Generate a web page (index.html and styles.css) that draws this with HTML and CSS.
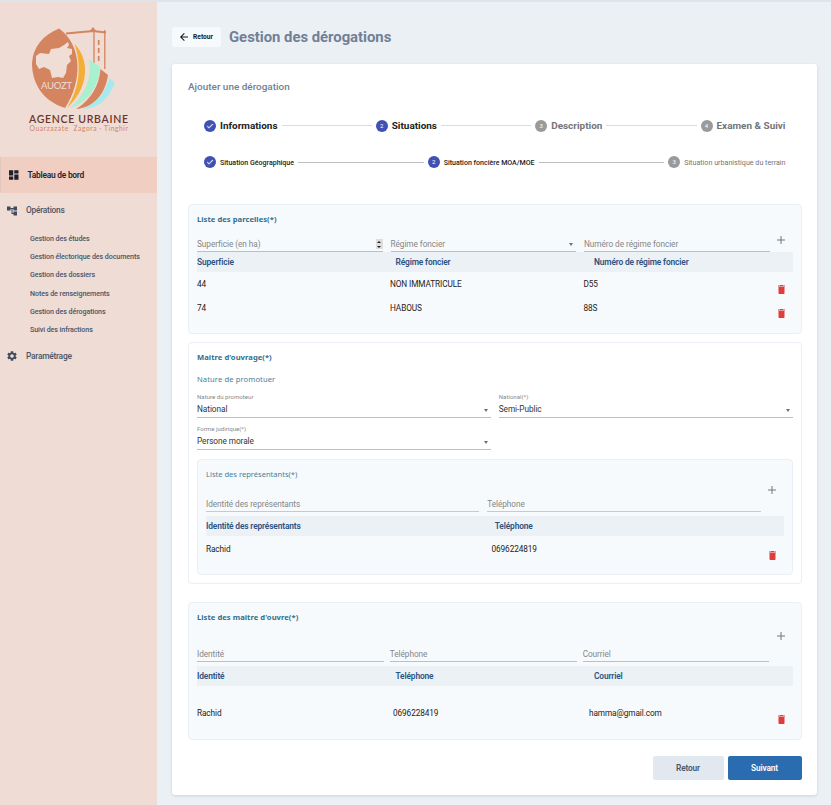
FILE: index.html
```html
<!DOCTYPE html>
<html lang="fr">
<head>
<meta charset="utf-8">
<title>Gestion des dérogations</title>
<link rel="stylesheet" href="styles.css">
</head>
<body>
<svg class="defs" aria-hidden="true">
  <symbol id="trash" viewBox="5 3 14 18"><path d="M6 19c0 1.1.9 2 2 2h8c1.100 0 2-.9 2-2V7H6v12zM19 4h-3.500l-1-1h-5l-1 1H5v2h14V4z"/></symbol>
  <symbol id="plus" viewBox="5 5 14 14"><path d="M19 12.900h-6.100V19h-1.800v-6.100H5v-1.800h6.100V5h1.800v6.100H19z"/></symbol>
  <symbol id="check" viewBox="0 0 24 24"><path d="M9 16.200L4.800 12l-1.400 1.400L9 19 21 7l-1.400-1.400z"/></symbol>
</svg>
<div class="app">
  <aside class="sidebar">
    <svg class="logo" viewBox="0 0 156 155">
      <g fill="none" stroke="#d4845f">
        <path d="M66 31.500L93 29L106 30.500" stroke-width="2"/>
        <path d="M94 30V61M104.800 28V67" stroke-width="1.300"/>
        <path d="M98.700 38V62" stroke-width="1.700" stroke-dasharray="5 3"/>
      </g>
      <path d="M89.500 29.500l3.500-4.500 3.500 4.500z" fill="#d4845f"/>
      <path d="M59 26.500C82 43 83 78 65 106C43 99 32 82 32 61C33 45 43 33 59 26.500Z" fill="#d4845f"/>
      <path d="M36 54l4-3 9 1 2-5 8-1 5-3 4-3 1 3-2 3 5 1 0 5-3 2 2 5-4 4-1 8-3 5-5-1-6 1-2-8-6-3-5 2-3-5z" fill="#f0ddd5"/>
      <path d="M74.500 42C91 59 88 87 67 106C81 84 81 61 74.500 42Z" fill="#f2ae35"/>
      <path d="M89 57L100 65C98 87 86 101 70 106C86 92 92 76 89 57Z" fill="#a7f1ce"/>
      <path d="M100.500 67L108 73C105 94 92 106 76 107C91 98 99 84 100.500 67Z" fill="#d4845f"/>
      <path d="M109.500 76L115 81C108 98 97 107 83 107C98 100 105 91 109.500 76Z" fill="#a5ebee"/>
      <text x="41" y="86.500" class="logo-mark" textLength="31">AUOZT</text>
      <text x="29" y="120.500" class="logo-name" textLength="99">AGENCE URBAINE</text>
      <text x="29.500" y="128.500" class="logo-sub" textLength="98.500">Ouarzazate&nbsp; Zagora · Tinghir</text>
    </svg>
    <nav>
      <a class="nav-item active">
        <svg class="ico" viewBox="3 3 18 18"><path d="M3 13h8V3H3v10zm0 8h8v-6H3v6zm10 0h8V11h-8v10zm0-18v6h8V3h-8z"/></svg>
        <span>Tableau de bord</span>
      </a>
      <a class="nav-item ops">
        <svg class="ico" viewBox="2 3 20 18"><path d="M22 11V3h-7v3H9V3H2v8h7V8h2v10h4v3h7v-8h-7v3h-2V8h2v3z"/></svg>
        <span>Opérations</span>
      </a>
      <div class="subnav">
        <a>Gestion des études</a>
        <a>Gestion électorique des documents</a>
        <a>Gestion des dossiers</a>
        <a>Notes de renseignements</a>
        <a>Gestion des dérogations</a>
        <a>Suivi des infractions</a>
      </div>
      <a class="nav-item param">
        <svg class="ico" viewBox="2 2 20 20"><path d="M19.140 12.940c.04-.3.060-.61.060-.94 0-.32-.02-.64-.07-.94l2.030-1.580c.18-.14.230-.41.120-.61l-1.920-3.320c-.12-.22-.37-.29-.59-.22l-2.390.96c-.5-.38-1.030-.7-1.620-.94l-.36-2.540c-.04-.24-.24-.41-.48-.41h-3.840c-.24 0-.43.170-.47.410l-.36 2.540c-.59.240-1.130.570-1.620.940l-2.390-.96c-.22-.08-.47 0-.59.220L2.740 8.870c-.12.210-.08.470.120.610l2.030 1.580c-.05.300-.09.630-.09.940s.02.640.070.940l-2.030 1.580c-.18.140-.23.410-.12.610l1.920 3.320c.12.220.370.290.590.220l2.390-.96c.5.380 1.030.700 1.620.940l.36 2.540c.05.240.240.410.480.410h3.840c.24 0 .44-.17.470-.41l.36-2.540c.59-.24 1.130-.56 1.620-.94l2.390.96c.22.080.470 0 .59-.22l1.920-3.320c.12-.22.070-.47-.12-.61l-2.010-1.580zM12 15.600c-1.980 0-3.600-1.620-3.600-3.600s1.620-3.600 3.600-3.600 3.600 1.620 3.600 3.600-1.620 3.600-3.600 3.600z"/></svg>
        <span>Paramétrage</span>
      </a>
    </nav>
  </aside>
  <main class="main">
    <header class="head">
      <button class="back"><svg viewBox="4 4 16 16"><path d="M20 11H7.830l5.590-5.590L12 4l-8 8 8 8 1.410-1.410L7.830 13H20v-2z"/></svg>Retour</button>
      <h1>Gestion des dérogations</h1>
    </header>
    <section class="card">
      <h2>Ajouter une dérogation</h2>
      <div class="stepper big">
        <i class="dot on"><svg><use href="#check"/></svg></i><span>Informations</span><hr>
        <i class="dot on">2</i><span>Situations</span><hr>
        <i class="dot">3</i><span class="off">Description</span><hr>
        <i class="dot">4</i><span class="off">Examen &amp; Suivi</span>
      </div>
      <div class="stepper small">
        <i class="dot on"><svg><use href="#check"/></svg></i><span>Situation Géographique</span><hr>
        <i class="dot on">2</i><span>Situation foncière MOA/MOE</span><hr>
        <i class="dot">3</i><span class="off light">Situation urbanistique du terrain</span>
      </div>

      <div class="panel parcels">
        <h3>Liste des parcelles(*)</h3>
        <div class="fields">
          <div class="field">Superficie (en ha)<span class="spin"><b class="up"></b><b class="down"></b></span></div>
          <div class="field">Régime foncier<span class="caret"></span></div>
          <div class="field">Numéro de régime foncier</div>
          <svg class="plus"><use href="#plus"/></svg>
        </div>
        <div class="thead"><span>Superficie</span><span>Régime foncier</span><span>Numéro de régime foncier</span></div>
        <div class="row"><span>44</span><span>NON IMMATRICULE</span><span>D55</span><svg class="trash"><use href="#trash"/></svg></div>
        <div class="row"><span>74</span><span>HABOUS</span><span>88S</span><svg class="trash"><use href="#trash"/></svg></div>
      </div>

      <div class="panel owner">
        <h3>Maitre d'ouvrage(*)</h3>
        <h4>Nature de promotuer</h4>
        <div class="selects">
          <div class="select"><label>Nature du promoteur</label><div class="value">National<span class="caret"></span></div></div>
          <div class="select"><label>National(*)</label><div class="value">Semi-Public<span class="caret"></span></div></div>
          <div class="select"><label>Forme judirique(*)</label><div class="value">Persone morale<span class="caret"></span></div></div>
        </div>
        <div class="panel reps">
          <h4>Liste des représentants(*)</h4>
          <div class="fields">
            <div class="field">Identité des représentants</div>
            <div class="field">Teléphone</div>
            <svg class="plus"><use href="#plus"/></svg>
          </div>
          <div class="thead"><span>Identité des représentants</span><span>Teléphone</span></div>
          <div class="row"><span>Rachid</span><span>0696224819</span><svg class="trash"><use href="#trash"/></svg></div>
        </div>
      </div>

      <div class="panel makers">
        <h3>Liste des maitre d'ouvre(*)</h3>
        <div class="fields">
          <div class="field">Identité</div>
          <div class="field">Teléphone</div>
          <div class="field">Courriel</div>
          <svg class="plus"><use href="#plus"/></svg>
        </div>
        <div class="thead"><span>Identité</span><span>Teléphone</span><span>Courriel</span></div>
        <div class="row"><span>Rachid</span><span>0696228419</span><span>hamma@gmail.com</span><svg class="trash"><use href="#trash"/></svg></div>
      </div>

      <div class="actions"><button class="btn prev">Retour</button><button class="btn next">Suivant</button></div>
    </section>
  </main>
</div>
</body>
</html>
```
FILE: styles.css
```css
* { box-sizing: border-box; }
body { margin: 0; font-family: Roboto, "Liberation Sans", sans-serif; font-size: 8.25px; letter-spacing: -.06px; color: #222; background: #ebf0f5; }
h1, h2, h3, h4 { margin: 0; white-space: nowrap; }
button { border: 0; font-family: inherit; }
span, a, label { white-space: nowrap; }
.defs { display: none; }
.app { display: flex; height: 805px; overflow: hidden; border-top: 2px solid #dfe4ea; }

/* Sidebar */
.sidebar { width: 156.5px; flex: none; background: #eedcd5; }
.logo { display: block; width: 156px; height: 155px; letter-spacing: 0; }
.logo-mark { font: 9.5px Lato, sans-serif; fill: #f0ddd5; }
.logo-name { font: 600 10.5px Lato, sans-serif; fill: #6b352e; }
.logo-sub { font: 6.7px Lato, sans-serif; fill: #d4845f; }
.nav-item { display: flex; align-items: center; color: #4a5568; font-weight: 500; font-size: 8.4px; letter-spacing: -.24px; }
.ico { width: 10px; height: 10px; fill: #3f4a5c; }
.nav-item span { margin: 0 0 1px 9px; }
.active { height: 36px; padding-left: 8px; background: #f0cfc2; color: #222630; font-weight: 600; border-left: 1px solid #e3c6bb; }
.active .ico { fill: #1d212b; width: 9.5px; }
.ops, .param { height: 36px; padding: 0 0 1px 7px; }
.subnav { display: grid; grid-auto-rows: 18.300px; align-items: center; padding: 0 0 0 30px; font-size: 7.1px; letter-spacing: -.075px; font-weight: 500; color: #4a5568; }

/* Header */
.main { flex: 1; padding: 25px 14px 0 15.5px; }
.head { display: flex; align-items: center; height: 20px; }
.back { width: 48.5px; height: 20px; padding: 0 0 0 8px; display: flex; align-items: center; gap: 5px; background: #f7fafc; border-radius: 3px; font-size: 6.7px; font-weight: 700; color: #1a1a1a; }
.back svg { width: 8px; height: 8px; fill: #111; }
h1 { margin-left: 8.5px; font-size: 14.9px; letter-spacing: -.03px; font-weight: 700; color: #718096; }

/* Card */
.card { margin-top: 17px; height: 731px; padding: 0 15.5px 0 16px; background: #fff; border-radius: 3px; box-shadow: 0 1px 3px rgba(60, 80, 110, .18); }
h2 { font-size: 9.95px; letter-spacing: 0; line-height: 46px; font-weight: 500; color: #718096; }
.stepper { display: flex; align-items: center; padding: 0 16px; letter-spacing: 0; }
.big { height: 31px; font-size: 9.95px; font-weight: 700; }
.small { height: 42px; font-size: 7.05px; font-weight: 500; }
.stepper hr { flex: 1; height: 1px; margin: 0 4px; border: 0; background: #dcdcdc; }
.small hr { background: #bdbdbd; }
.dot { width: 12px; height: 12px; margin-right: 4px; border-radius: 50%; background: #9a9a9a; color: #fff; font-size: 6px; line-height: 12px; font-style: normal; font-weight: 400; text-align: center; }
.dot.on { background: #3f51b5; }
.dot svg { display: block; width: 8px; height: 8px; margin: 2px; fill: #fff; stroke: #fff; }
.stepper .off { color: #757575; }
.stepper .light { font-weight: 400; font-size: 7.15px; }

/* Panels */
.panel { border: 1px solid #e9eff5; border-radius: 4px; background: #f7fafc; padding: 0 8px; }
h3 { font: 700 7.6px/28px "Noto Sans", sans-serif; color: #31708e; letter-spacing: .05px; }
h4 { font: 400 7.6px/16px "Noto Sans", sans-serif; color: #4a8098; letter-spacing: .1px; }
.fields { display: flex; position: relative; gap: 8px; padding-right: 23px; }
.field { flex: 1; position: relative; height: 16px; line-height: 16px; border-bottom: 1px solid #bcbfc3; color: #848688; }
.caret { position: absolute; right: 3px; top: 7px; border: 2.5px solid transparent; border-top: 3px solid #707070; border-bottom: 0; }
.spin { position: absolute; right: 0; top: 3px; width: 7px; height: 10px; background: #dedede; display: flex; flex-direction: column; align-items: center; justify-content: space-around; }
.up, .down { border: 2px solid transparent; }
.up { border-bottom: 2.5px solid #222; border-top: 0; }
.down { border-top: 2.5px solid #222; border-bottom: 0; }
.plus { position: absolute; right: 8px; width: 8px; height: 8px; fill: #777; }
.thead { display: grid; grid-template-columns: repeat(3, 1fr); height: 20px; line-height: 20px; background: #ebf1f5; color: #2c5282; font-weight: 600; font-size: 8.4px; letter-spacing: -.15px; }
.row { position: relative; display: grid; height: 24px; line-height: 24px; font-size: 8.25px; letter-spacing: -.1px; }
.trash { position: absolute; right: 8px; top: 13px; width: 7px; height: 9px; fill: #e03c3c; }

.parcels { height: 130px; margin-top: 21px; }
.parcels .fields { padding-top: 3px; }
.parcels .plus { top: 3px; }
.parcels .row { grid-template-columns: 193px 193.500px 1fr; }

.owner { height: 242px; margin-top: 8px; background: #fff; }
.selects { display: grid; grid-template-columns: 1fr 1fr; column-gap: 8px; padding-top: 5px; }
.select { height: 32px; }
.select label { display: block; height: 10px; font-size: 6.1px; line-height: 10px; letter-spacing: 0; color: #8a8a8a; }
.value { position: relative; height: 16px; line-height: 15px; border-bottom: 1px solid #bcbfc3; color: #333; }
.reps { height: 116px; margin-top: 3px; }
.reps h4 { font-size: 7.6px; letter-spacing: -.02px; line-height: 29px; padding-bottom: 7px; }
.reps .field { border-bottom: 1px solid #c6cace; }
.reps .plus { top: -10px; }
.reps .thead { grid-template-columns: 1fr 1fr; margin-top: 4px; }
.reps .row { grid-template-columns: 285.5px 1fr; margin-top: 1px; }
.reps .trash { top: 14px; }

.makers { height: 138px; margin-top: 18px; }
.makers .fields { gap: 6px; padding-top: 15px; }
.makers .plus { top: 1px; }
.makers .thead { margin-top: 4px; }
.makers .row { grid-template-columns: 196px 196px 1fr; margin-top: 15px; }
.makers .trash { top: 14px; }

.actions { display: flex; justify-content: flex-end; gap: 4px; margin-top: 16px; }
.btn { height: 24px; border-radius: 2px; font-size: 8.3px; letter-spacing: -.15px; font-weight: 600; padding: 0; }
.prev { width: 71px; background: #e2e8f0; color: #4a5568; }
.next { width: 74px; background: #2b6cb0; color: #fff; }
```
